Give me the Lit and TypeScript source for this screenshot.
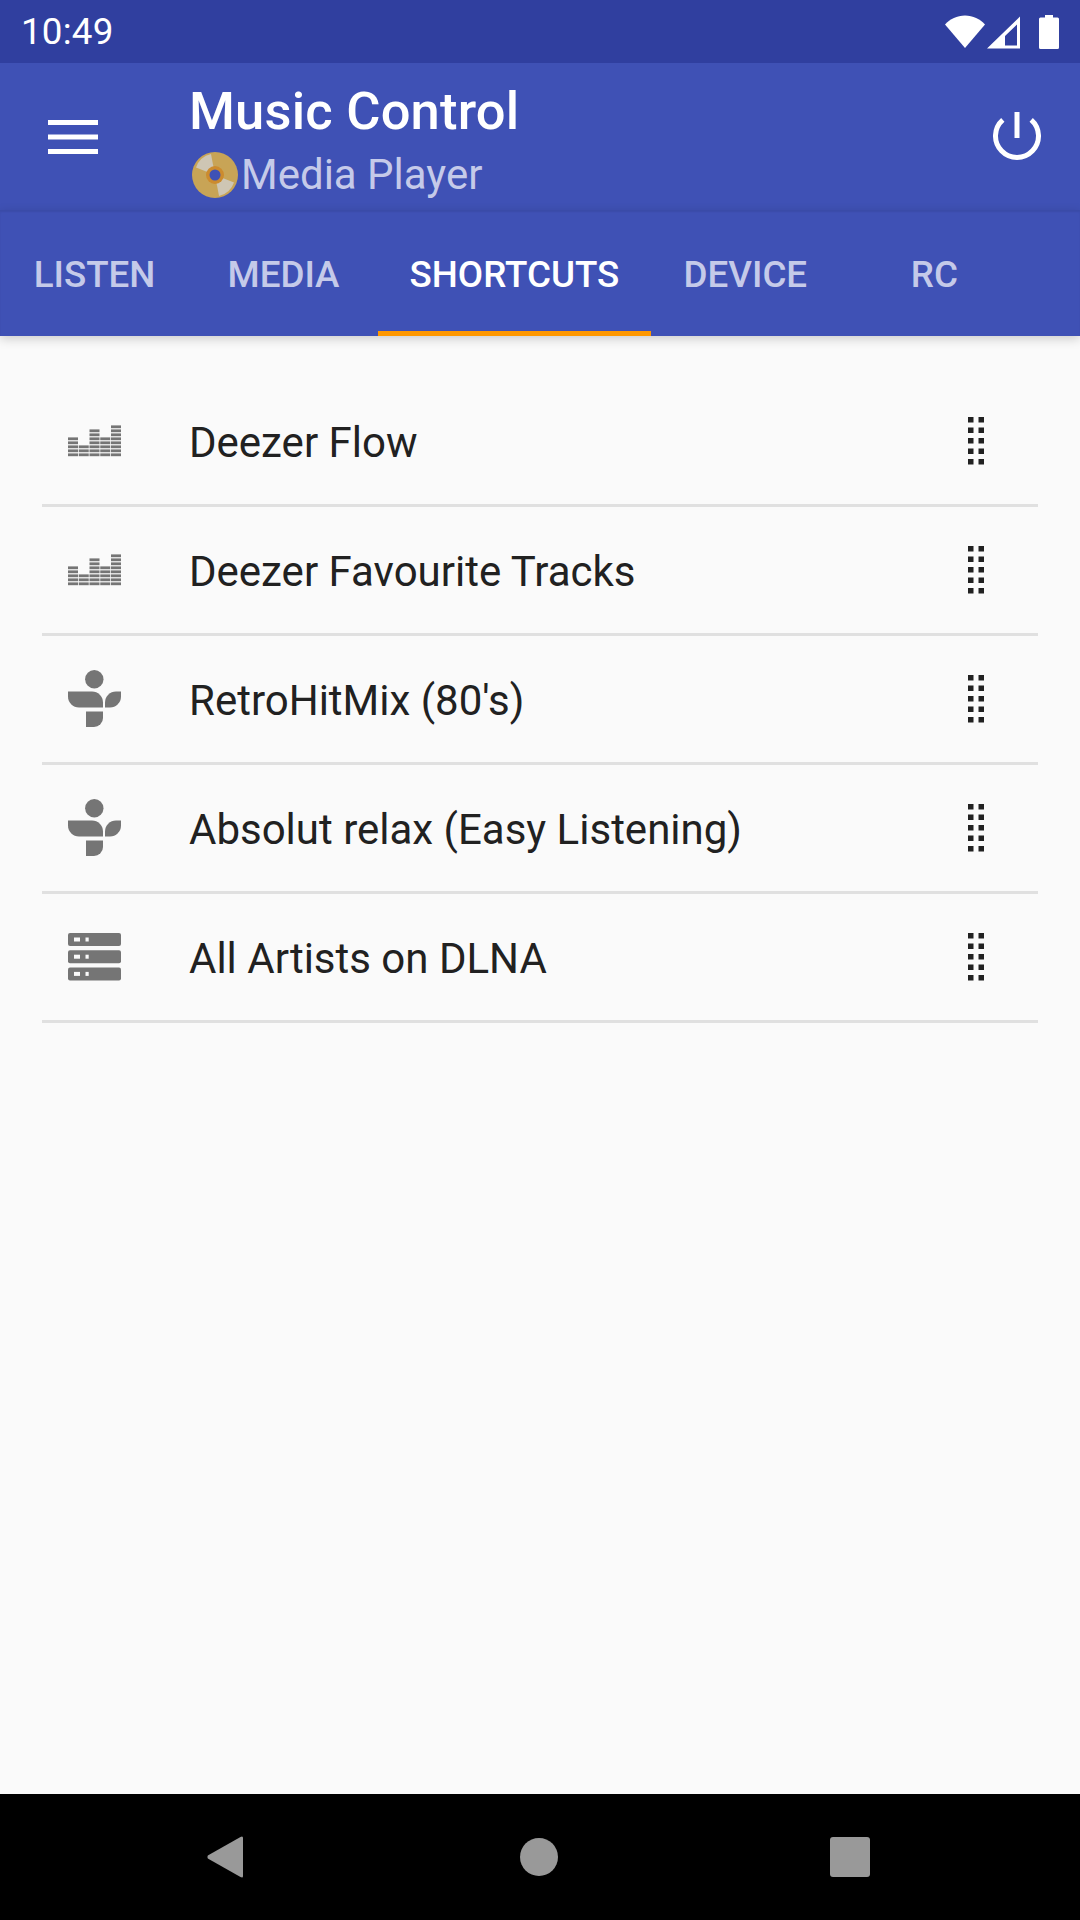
import { LitElement, css, html, svg } from 'lit';
import { customElement } from 'lit/decorators.js';

type Shortcut = { icon: 'deezer' | 'tunein' | 'server'; label: string };

const SHORTCUTS: Shortcut[] = [
  { icon: 'deezer', label: 'Deezer Flow' },
  { icon: 'deezer', label: 'Deezer Favourite Tracks' },
  { icon: 'tunein', label: "RetroHitMix (80's)" },
  { icon: 'tunein', label: 'Absolut relax (Easy Listening)' },
  { icon: 'server', label: 'All Artists on DLNA' },
];

const TABS = ['LISTEN', 'MEDIA', 'SHORTCUTS', 'DEVICE', 'RC'];

// number of bars per equalizer column, left to right
const EQ_COLUMNS = [5, 3, 7, 5, 8];

const deezerIcon = html`<svg class="icon" viewBox="0 0 53 32">
  ${EQ_COLUMNS.map((count, col) =>
    Array.from({ length: count }, (_, row) =>
      svg`<rect x=${col * 10.75} y=${28.4 - row * 4} width="10" height="2.8" fill="#757575" />`
    )
  )}
</svg>`;

const tuneinIcon = html`<svg class="icon" viewBox="0 0 53 58">
  <g fill="#757575">
    <circle cx="26.3" cy="9.3" r="9.2" />
    <path d="M0 21.500H24a11 11 0 0 1 11 11V37.500H11A11 11 0 0 1 0 26.500Z" />
    <path d="M53 21.500V26.500A11 11 0 0 1 42 37.500H37V32.500A11 11 0 0 1 48 21.500Z" />
    <path d="M18 41.500H35V48A9 9 0 0 1 26 57H18Z" />
  </g>
</svg>`;

const serverIcon = html`<svg class="icon" viewBox="0 0 53 48">
  ${[0, 17.2, 34.4].map(
    (y) => svg`
      <rect x="0" y=${y} width="53" height="13" rx="2" fill="#757575" />
      <rect x="6" y=${y + 4.5} width="6" height="4" fill="#fafafa" />
      <rect x="17.5" y=${y + 4.5} width="3.2" height="4" fill="#fafafa" />
    `
  )}
</svg>`;

const ICONS = { deezer: deezerIcon, tunein: tuneinIcon, server: serverIcon };

@customElement('app-root')
export class AppRoot extends LitElement {
  static styles = css`
    :host {
      display: flex;
      flex-direction: column;
      width: 1080px;
      height: 1920px;
      overflow: hidden;
      background: #fafafa;
      font-family: Roboto, sans-serif;
      color: #212121;
    }
    svg {
      display: block;
    }
    .status {
      height: 63px;
      flex: none;
      display: flex;
      align-items: center;
      background: #303f9f;
      color: #fff;
      font-size: 36.75px;
      padding: 0 21px;
    }
    .time {
      flex: 1;
      letter-spacing: 0.2px;
    }
    .wifi {
      width: 40px;
      height: 34px;
      margin-top: 1px;
    }
    .signal {
      width: 34px;
      height: 33px;
      margin: 1px 0 0 2px;
    }
    .battery {
      width: 20px;
      height: 34px;
      margin: 0 0 0 18px;
    }
    .toolbar {
      height: 147px;
      flex: none;
      display: flex;
      align-items: center;
      background: #3f51b5;
      color: #fff;
    }
    .menu {
      width: 50px;
      height: 34px;
      margin: 0 91px 0 48px;
    }
    .heading {
      flex: 1;
      display: flex;
      flex-direction: column;
      gap: 4.5px;
      margin-top: 7.5px;
    }
    .title {
      font-size: 52.5px;
      font-weight: 500;
      line-height: 64px;
      letter-spacing: 0.2px;
    }
    .subtitle {
      display: flex;
      align-items: center;
      gap: 3px;
      font-size: 42px;
      line-height: 54px;
      color: #c5cae9;
      margin-left: 3px;
    }
    .disc {
      width: 46px;
      height: 46px;
    }
    .power {
      width: 48px;
      height: 48px;
      margin: -2px 39px 0 0;
    }
    .tabs {
      height: 126px;
      flex: none;
      display: flex;
      background: #3f51b5;
      box-shadow: 0 3px 10px rgba(0, 0, 0, 0.18), inset 0 2px 2px rgba(0, 0, 0, 0.07);
      position: relative;
    }
    .tab {
      min-width: 189px;
      box-sizing: border-box;
      padding: 0 31.5px;
      display: flex;
      align-items: center;
      justify-content: center;
      font-size: 36.75px;
      font-weight: 500;
      color: #c5cae9;
      border-bottom: 5px solid transparent;
      border-top: 7px solid transparent;
    }
    .tab.active {
      color: #fff;
      border-bottom-color: #ff9800;
    }
    .list {
      flex: 1;
      padding: 42px 42px 0;
    }
    .row {
      height: 129px;
      box-sizing: border-box;
      display: flex;
      align-items: center;
      border-bottom: 3px solid #e0e0e0;
    }
    .icon-cell {
      width: 147px;
      padding-left: 26px;
      box-sizing: border-box;
      flex: none;
    }
    .icon {
      width: 53px;
      height: auto;
    }
    .label {
      flex: 1;
      font-size: 42px;
      padding-top: 2px;
    }
    .handle {
      width: 16px;
      height: 48px;
      margin-right: 54px;
    }
    .nav {
      height: 126px;
      flex: none;
      background: #000;
      display: grid;
      grid-template-columns: 207px 36px 277px 38px 272px 40px;
      align-items: center;
    }
    .nav svg {
      fill: #999;
    }
    .back {
      grid-column: 2;
      width: 36px;
      height: 42px;
    }
    .home {
      grid-column: 4;
      width: 38px;
      height: 38px;
    }
    .recent {
      grid-column: 6;
      width: 40px;
      height: 40px;
    }
  `;

  render() {
    return html`
      <div class="status">
        <span class="time">10:49</span>
        <svg class="wifi" viewBox="0 0 40 34">
          <path d="M0 9.500C5 4 12 .5 20 .5S35 4 40 9.500L20 33Z" fill="#fff" />
        </svg>
        <svg class="signal" viewBox="0 0 34 33">
          <path fill-rule="evenodd" d="M0 32.500L33 .5V32.500ZM18 29.500H30V8.500L18 20Z" fill="#fff" />
        </svg>
        <svg class="battery" viewBox="0 0 20 34">
          <path d="M6 0H14V2.500H18.500A1.500 1.500 0 0 1 20 4V32.500A1.500 1.500 0 0 1 18.500 34H1.500A1.500 1.500 0 0 1 0 32.500V4A1.500 1.500 0 0 1 1.500 2.500H6Z" fill="#fff" />
        </svg>
      </div>
      <div class="toolbar">
        <svg class="menu" viewBox="0 0 50 34">
          <path d="M0 0H50V5H0ZM0 14.500H50V19.500H0ZM0 29H50V34H0Z" fill="#fff" />
        </svg>
        <div class="heading">
          <div class="title">Music Control</div>
          <div class="subtitle">
            <svg class="disc" viewBox="0 0 46 46">
              <circle cx="23" cy="23" r="23" fill="#c8a456" />
              <path d="M23 23L4 15.500A21 21 0 0 1 19 2Z" fill="#cec6b4" />
              <path d="M23 23L42 30.500A21 21 0 0 1 27 44Z" fill="#cec6b4" />
              <circle cx="23" cy="23" r="9" fill="#cc8b2e" />
              <circle cx="23" cy="23" r="5.500" fill="#3f51b5" />
            </svg>
            <span>Media Player</span>
          </div>
        </div>
        <svg class="power" viewBox="0 0 48 48">
          <path d="M9.800 7.800A21.500 21.500 0 1 0 38.200 7.800" fill="none" stroke="#fff" stroke-width="5" />
          <path d="M24 0V26" fill="none" stroke="#fff" stroke-width="5" />
        </svg>
      </div>
      <div class="tabs">
        ${TABS.map(
          (tab) => html`<div class="tab ${tab === 'SHORTCUTS' ? 'active' : ''}">${tab}</div>`
        )}
      </div>
      <div class="list">
        ${SHORTCUTS.map(
          (item) => html`
            <div class="row">
              <div class="icon-cell">${ICONS[item.icon]}</div>
              <div class="label">${item.label}</div>
              <svg class="handle" viewBox="0 0 16 48">
                ${[0, 1, 2, 3, 4].map(
                  (r) => svg`
                    <rect x="0" y=${r * 10.5} width="5.500" height="5.500" fill="#212121" />
                    <rect x="10.500" y=${r * 10.5} width="5.500" height="5.500" fill="#212121" />
                  `
                )}
              </svg>
            </div>
          `
        )}
      </div>
      <div class="nav">
        <svg class="back" viewBox="0 0 36 42">
          <path d="M35 0.500Q36 0.500 36 2V40Q36 41.500 35 41.500L33.500 41L0.800 22.500Q0 21 0.800 19.500L33.500 1Z" />
        </svg>
        <svg class="home" viewBox="0 0 38 38"><circle cx="19" cy="19" r="19" /></svg>
        <svg class="recent" viewBox="0 0 40 40"><rect width="40" height="40" rx="3" /></svg>
      </div>
    `;
  }
}
